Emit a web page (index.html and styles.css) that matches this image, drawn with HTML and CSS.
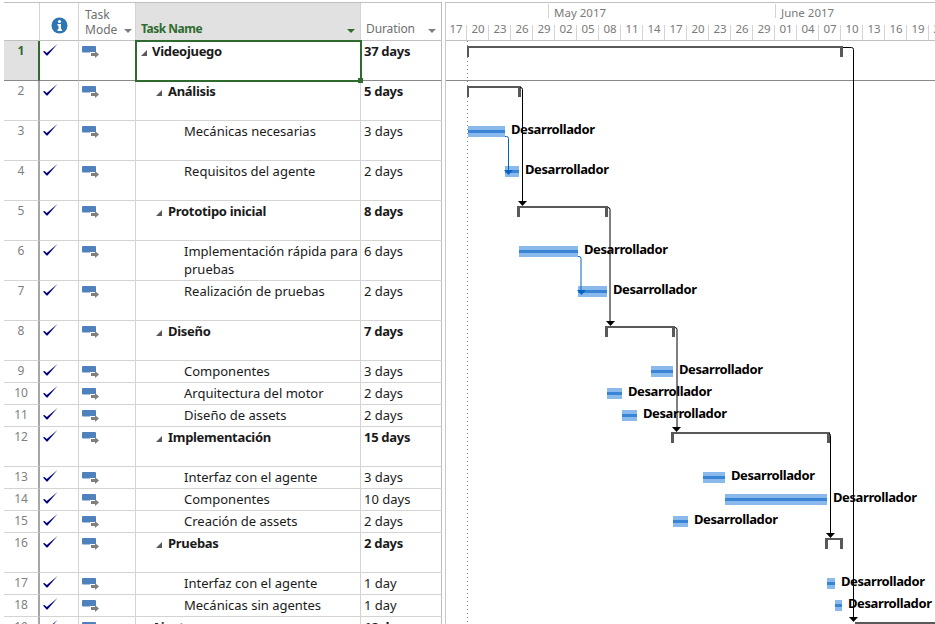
FILE: index.html
```html
<!DOCTYPE html>
<html lang="en">
<head>
  <meta charset="UTF-8">
  <title>Videojuego - Gantt</title>
  <link rel="stylesheet" href="styles.css">
</head>
<body>
  <svg class="defs" width="0" height="0">
    <symbol id="check" viewBox="0 0 16 14">
      <path d="M0 7.5 L1.5 7 L3.8 9 L14.5 0 L4.5 11.5 L3.5 11.5 Z" fill="#00007f"/>
    </symbol>
    <symbol id="mode" viewBox="0 0 18 14">
      <rect x="0" y="1" width="14" height="6.5" rx="1" fill="#4f81bd"/>
      <path d="M8 9.5 H13" stroke="#fff" stroke-width="5"/>
      <path d="M9 9.5 H14" stroke="#7f7f7f" stroke-width="3"/>
      <path d="M13 6 L17 9.5 L13 13 Z" fill="#7f7f7f"/>
    </symbol>
  </svg>

  <div class="page">
    <div class="sheet">
      <div class="row head">
        <div class="cell"></div>
        <div class="cell info-head">
          <svg width="17" height="17" viewBox="0 0 17 17">
            <circle cx="8.5" cy="8.5" r="8" fill="#2e75b6"/>
            <circle cx="8.5" cy="4.5" r="1.6" fill="#fff"/>
            <path d="M6.5 7 H10 V12.2 H11 V14 H6.5 V12.2 H7.5 V8.8 H6.5 Z" fill="#fff"/>
          </svg>
        </div>
        <div class="cell mode-head">Task Mode<span class="drop"></span></div>
        <div class="cell name-head">Task Name<span class="drop green"></span></div>
        <div class="cell dur-head">Duration<span class="drop"></span></div>
      </div>

      <div class="row tall selected">
        <div class="cell num">1</div>
        <div class="cell"><svg class="check"><use href="#check"/></svg></div>
        <div class="cell"><svg class="mode"><use href="#mode"/></svg></div>
        <div class="cell name lvl0 bold active"><span class="tri"></span>Videojuego</div>
        <div class="cell dur bold">37 days</div>
      </div>
      <div class="row tall">
        <div class="cell num">2</div>
        <div class="cell"><svg class="check"><use href="#check"/></svg></div>
        <div class="cell"><svg class="mode"><use href="#mode"/></svg></div>
        <div class="cell name lvl1 bold"><span class="tri"></span>Análisis</div>
        <div class="cell dur bold">5 days</div>
      </div>
      <div class="row tall">
        <div class="cell num">3</div>
        <div class="cell"><svg class="check"><use href="#check"/></svg></div>
        <div class="cell"><svg class="mode"><use href="#mode"/></svg></div>
        <div class="cell name lvl2">Mecánicas necesarias</div>
        <div class="cell dur">3 days</div>
      </div>
      <div class="row tall">
        <div class="cell num">4</div>
        <div class="cell"><svg class="check"><use href="#check"/></svg></div>
        <div class="cell"><svg class="mode"><use href="#mode"/></svg></div>
        <div class="cell name lvl2">Requisitos del agente</div>
        <div class="cell dur">2 days</div>
      </div>
      <div class="row tall">
        <div class="cell num">5</div>
        <div class="cell"><svg class="check"><use href="#check"/></svg></div>
        <div class="cell"><svg class="mode"><use href="#mode"/></svg></div>
        <div class="cell name lvl1 bold"><span class="tri"></span>Prototipo inicial</div>
        <div class="cell dur bold">8 days</div>
      </div>
      <div class="row tall">
        <div class="cell num">6</div>
        <div class="cell"><svg class="check"><use href="#check"/></svg></div>
        <div class="cell"><svg class="mode"><use href="#mode"/></svg></div>
        <div class="cell name lvl2">Implementación rápida para pruebas</div>
        <div class="cell dur">6 days</div>
      </div>
      <div class="row tall">
        <div class="cell num">7</div>
        <div class="cell"><svg class="check"><use href="#check"/></svg></div>
        <div class="cell"><svg class="mode"><use href="#mode"/></svg></div>
        <div class="cell name lvl2">Realización de pruebas</div>
        <div class="cell dur">2 days</div>
      </div>
      <div class="row tall">
        <div class="cell num">8</div>
        <div class="cell"><svg class="check"><use href="#check"/></svg></div>
        <div class="cell"><svg class="mode"><use href="#mode"/></svg></div>
        <div class="cell name lvl1 bold"><span class="tri"></span>Diseño</div>
        <div class="cell dur bold">7 days</div>
      </div>
      <div class="row">
        <div class="cell num">9</div>
        <div class="cell"><svg class="check"><use href="#check"/></svg></div>
        <div class="cell"><svg class="mode"><use href="#mode"/></svg></div>
        <div class="cell name lvl2">Componentes</div>
        <div class="cell dur">3 days</div>
      </div>
      <div class="row">
        <div class="cell num">10</div>
        <div class="cell"><svg class="check"><use href="#check"/></svg></div>
        <div class="cell"><svg class="mode"><use href="#mode"/></svg></div>
        <div class="cell name lvl2">Arquitectura del motor</div>
        <div class="cell dur">2 days</div>
      </div>
      <div class="row">
        <div class="cell num">11</div>
        <div class="cell"><svg class="check"><use href="#check"/></svg></div>
        <div class="cell"><svg class="mode"><use href="#mode"/></svg></div>
        <div class="cell name lvl2">Diseño de assets</div>
        <div class="cell dur">2 days</div>
      </div>
      <div class="row tall">
        <div class="cell num">12</div>
        <div class="cell"><svg class="check"><use href="#check"/></svg></div>
        <div class="cell"><svg class="mode"><use href="#mode"/></svg></div>
        <div class="cell name lvl1 bold"><span class="tri"></span>Implementación</div>
        <div class="cell dur bold">15 days</div>
      </div>
      <div class="row">
        <div class="cell num">13</div>
        <div class="cell"><svg class="check"><use href="#check"/></svg></div>
        <div class="cell"><svg class="mode"><use href="#mode"/></svg></div>
        <div class="cell name lvl2">Interfaz con el agente</div>
        <div class="cell dur">3 days</div>
      </div>
      <div class="row">
        <div class="cell num">14</div>
        <div class="cell"><svg class="check"><use href="#check"/></svg></div>
        <div class="cell"><svg class="mode"><use href="#mode"/></svg></div>
        <div class="cell name lvl2">Componentes</div>
        <div class="cell dur">10 days</div>
      </div>
      <div class="row">
        <div class="cell num">15</div>
        <div class="cell"><svg class="check"><use href="#check"/></svg></div>
        <div class="cell"><svg class="mode"><use href="#mode"/></svg></div>
        <div class="cell name lvl2">Creación de assets</div>
        <div class="cell dur">2 days</div>
      </div>
      <div class="row tall">
        <div class="cell num">16</div>
        <div class="cell"><svg class="check"><use href="#check"/></svg></div>
        <div class="cell"><svg class="mode"><use href="#mode"/></svg></div>
        <div class="cell name lvl1 bold"><span class="tri"></span>Pruebas</div>
        <div class="cell dur bold">2 days</div>
      </div>
      <div class="row">
        <div class="cell num">17</div>
        <div class="cell"><svg class="check"><use href="#check"/></svg></div>
        <div class="cell"><svg class="mode"><use href="#mode"/></svg></div>
        <div class="cell name lvl2">Interfaz con el agente</div>
        <div class="cell dur">1 day</div>
      </div>
      <div class="row">
        <div class="cell num">18</div>
        <div class="cell"><svg class="check"><use href="#check"/></svg></div>
        <div class="cell"><svg class="mode"><use href="#mode"/></svg></div>
        <div class="cell name lvl2">Mecánicas sin agentes</div>
        <div class="cell dur">1 day</div>
      </div>
      <div class="row">
        <div class="cell num">19</div>
        <div class="cell"><svg class="check"><use href="#check"/></svg></div>
        <div class="cell"><svg class="mode"><use href="#mode"/></svg></div>
        <div class="cell name lvl0 bold"><span class="tri"></span>Ajustes</div>
        <div class="cell dur bold">12 days</div>
      </div>
    </div>

    <div class="chart">
      <div class="timescale">
        <div class="months">
          <div class="month lead"></div>
          <div class="month may">May 2017</div>
          <div class="month">June 2017</div>
        </div>
        <div class="days">
          <div class="day">17</div><div class="day">20</div><div class="day">23</div><div class="day">26</div>
          <div class="day">29</div><div class="day">02</div><div class="day">05</div><div class="day">08</div>
          <div class="day">11</div><div class="day">14</div><div class="day">17</div><div class="day">20</div>
          <div class="day">23</div><div class="day">26</div><div class="day">29</div><div class="day">01</div>
          <div class="day">04</div><div class="day">07</div><div class="day">10</div><div class="day">13</div>
          <div class="day">16</div><div class="day">19</div><div class="day">22</div>
        </div>
      </div>

      <!-- viewBox uses page coordinates, easier to read against the rows -->
      <svg class="canvas" width="489" height="583" viewBox="446 41 489 583">
        <path class="today" d="M467.5 41 V624"/>
        <path class="sel-line" d="M445 80.5 H935"/>

        <!-- summaries -->
        <path class="summary" d="M467 46 H843 V57 H840 V48 H469 V57 H467 Z"/>
        <path class="summary" d="M467 86 H521 V97 H518 V88 H469 V97 H467 Z"/>
        <path class="summary" d="M517 206 H608 V217 H605 V208 H520 V217 H517 Z"/>
        <path class="summary" d="M605 326 H675 V337 H672 V328 H608 V337 H605 Z"/>
        <path class="summary" d="M671 432 H830 V443 H827 V434 H674 V443 H671 Z"/>
        <path class="summary" d="M825 538 H843 V549 H840 V540 H828 V549 H825 Z"/>
        <rect class="summary" x="855" y="622" width="80" height="2"/>

        <!-- tasks -->
        <rect class="bar" x="468" y="126" width="37" height="11"/><rect class="fill" x="468" y="130" width="37" height="3"/>
        <rect class="bar" x="505" y="166" width="14" height="11"/><rect class="fill" x="505" y="170" width="14" height="3"/>
        <rect class="bar" x="519" y="246" width="59" height="11"/><rect class="fill" x="519" y="250" width="59" height="3"/>
        <rect class="bar" x="578" y="286" width="29" height="11"/><rect class="fill" x="578" y="290" width="29" height="3"/>
        <rect class="bar" x="651" y="366" width="22" height="11"/><rect class="fill" x="651" y="370" width="22" height="3"/>
        <rect class="bar" x="607" y="388" width="15" height="11"/><rect class="fill" x="607" y="392" width="15" height="3"/>
        <rect class="bar" x="622" y="410" width="15" height="11"/><rect class="fill" x="622" y="414" width="15" height="3"/>
        <rect class="bar" x="703" y="472" width="22" height="11"/><rect class="fill" x="703" y="476" width="22" height="3"/>
        <rect class="bar" x="725" y="494" width="102" height="11"/><rect class="fill" x="725" y="498" width="102" height="3"/>
        <rect class="bar" x="673" y="516" width="15" height="11"/><rect class="fill" x="673" y="520" width="15" height="3"/>
        <rect class="bar" x="827" y="578" width="8" height="11"/><rect class="fill" x="827" y="582" width="8" height="3"/>
        <rect class="bar" x="835" y="600" width="7" height="11"/><rect class="fill" x="835" y="604" width="7" height="3"/>

        <!-- links -->
        <path class="link" d="M843 47.5 H851.5 a2 2 0 0 1 2 2 V618"/><path d="M849 617 H858 L853.5 622 Z"/>
        <path class="link" d="M521 87.5 H520.5 a2 2 0 0 1 2 2 V202"/><path d="M518 201 H527 L522.5 206 Z"/>
        <path class="link" d="M608 207.5 a2 2 0 0 1 2 2 V322"/><path d="M606 321 H615 L610.5 326 Z"/>
        <path class="link" d="M675 327.5 a2 2 0 0 1 2 2 V428"/><path d="M672 427 H681 L676.5 432 Z"/>
        <path class="link" d="M829 433.5 a2 2 0 0 1 1.5 2 V534"/><path d="M826 533 H835 L830.5 538 Z"/>
        <path class="link blue" d="M505 136.5 H506.5 a2 2 0 0 1 2 2 V171"/><path class="arrow-blue" d="M504 170 H513 L508.5 175 Z"/>
        <path class="link blue" d="M578 256.5 H579 a2 2 0 0 1 2 2 V291"/><path class="arrow-blue" d="M577 290 H586 L581.5 295 Z"/>

        <!-- resource names -->
        <text class="res" x="511" y="134">Desarrollador</text>
        <text class="res" x="525" y="174">Desarrollador</text>
        <text class="res" x="584" y="254">Desarrollador</text>
        <text class="res" x="613" y="294">Desarrollador</text>
        <text class="res" x="679" y="374">Desarrollador</text>
        <text class="res" x="628" y="396">Desarrollador</text>
        <text class="res" x="643" y="418">Desarrollador</text>
        <text class="res" x="731" y="480">Desarrollador</text>
        <text class="res" x="833" y="502">Desarrollador</text>
        <text class="res" x="694" y="524">Desarrollador</text>
        <text class="res" x="841" y="586">Desarrollador</text>
        <text class="res" x="848" y="608">Desarrollador</text>
      </svg>
    </div>
  </div>
</body>
</html>
```

FILE: styles.css
```css
html, body {
  margin: 0;
  padding: 0;
  height: 624px;
  overflow: hidden;
  background: #fff;
  font-family: "Noto Sans", "Open Sans", sans-serif;
  font-size: 13px;
  color: #1a1a1a;
}

.defs {
  display: block;
}

.page {
  display: flex;
  gap: 3px;
  width: 935px;
  height: 622px;
  padding: 2px 0 0 4px;
  box-sizing: content-box;
  overflow: hidden;
}

.sheet {
  width: 438px;
  flex: none;
  border-top: 1px solid #c0c0c0;
}

.row {
  display: grid;
  grid-template-columns: 36px 39px 57px 225px 81px;
  height: 22px;
}

.row.tall {
  height: 40px;
}

.row.head {
  height: 38px;
}

.cell {
  position: relative;
  box-sizing: border-box;
  border-right: 1px solid #d4d4d4;
  border-bottom: 1px solid #d4d4d4;
  line-height: 18px;
  padding-top: 1px;
}

.cell:first-child {
  border-right: 2px solid #a6a6a6;
}

.cell:last-child {
  border-right: 1px solid #bdbdbd;
}

/* header */
.head .cell {
  border-bottom-color: #c0c0c0;
  color: #6f6f6f;
  font-size: 12px;
}

.head .cell:first-child {
  border-right: 1px solid #d4d4d4;
}

.info-head {
  display: flex;
  align-items: flex-end;
  justify-content: center;
  padding-bottom: 6px;
}

.mode-head {
  line-height: 15px;
  padding: 4px 24px 0 6px;
}

.name-head {
  background: #e1e1e1;
  padding: 17px 0 0 5px;
  font-weight: bold;
  letter-spacing: -0.5px;
  color: #2f6b2f !important;
}

.dur-head {
  padding: 17px 0 0 5px;
  letter-spacing: -0.1px;
}

.drop {
  position: absolute;
  right: 5px;
  bottom: 7px;
  width: 0;
  height: 0;
  border-left: 4px solid transparent;
  border-right: 4px solid transparent;
  border-top: 4px solid #7f7f7f;
}

.mode-head .drop {
  right: 3px;
}

.drop.green {
  border-top-color: #2f6b2f;
}

/* rows */
.num {
  text-align: center;
  font-size: 12px;
  color: #7f7f7f;
}

.check {
  display: block;
  width: 16px;
  height: 14px;
  margin: 2px 0 0 3px;
}

.mode {
  display: block;
  width: 18px;
  height: 14px;
  margin: 3px 0 0 3px;
}

.name {
  padding-right: 2px;
}

.lvl0 {
  padding-left: 5px;
}

.lvl1 {
  padding-left: 20px;
}

.lvl2 {
  padding-left: 48px;
}

.dur {
  padding-left: 3px;
}

.bold {
  font-weight: bold;
  letter-spacing: -0.3px;
}

.tri {
  display: inline-block;
  width: 6px;
  height: 6px;
  margin-right: 6px;
  background: #595959;
  clip-path: polygon(100% 0, 100% 100%, 0 100%);
}

.lvl0 .tri {
  margin-right: 5px;
}

/* selected row */
.selected .cell {
  border-bottom-color: #8a8a8a;
}

.selected .num {
  background: #e1e1e1;
  color: #2f6b2f;
  font-weight: bold;
  border-right: 2px solid #2f6b2f;
}

.active {
  z-index: 1;
  border: 0;
  outline: 2px solid #2f6b2f;
  outline-offset: -1px;
  padding-top: 1px;
}

.active::after {
  content: "";
  position: absolute;
  right: -2px;
  bottom: -2px;
  width: 5px;
  height: 5px;
  background: #2f6b2f;
}

/* gantt */
.chart {
  width: 489px;
  flex: none;
  border-left: 1px solid #c8c8c8;
  border-top: 1px solid #c0c0c0;
  overflow: hidden;
}

.timescale {
  height: 37px;
  border-bottom: 1px solid #c0c0c0;
  font-size: 11.5px;
  color: #7a7a7a;
}

.months {
  display: flex;
  height: 16px;
}

.month {
  position: relative;
  padding-left: 6px;
  line-height: 19px;
  white-space: nowrap;
}

.month.lead {
  box-sizing: border-box;
  width: 102px;
  padding: 0;
}

.month.may {
  box-sizing: border-box;
  width: 227px;
}

.month::before {
  content: "";
  position: absolute;
  left: 0;
  top: 1px;
  height: 14px;
  width: 1px;
  background: #d4d4d4;
}

.month.lead::before {
  display: none;
}

.days {
  display: flex;
  height: 21px;
  margin-left: -1px;
}

.day {
  position: relative;
  flex: none;
  width: 22px;
  text-align: center;
  line-height: 20px;
}

.day::after {
  content: "";
  position: absolute;
  right: 0;
  bottom: 0;
  width: 1px;
  height: 15px;
  background: #d4d4d4;
}

.canvas {
  display: block;
}

.today {
  stroke: #8c8c8c;
  stroke-width: 1;
  stroke-dasharray: 1 3;
  fill: none;
}

.sel-line {
  stroke: #8a8a8a;
  stroke-width: 1;
}

.summary {
  fill: #595959;
}

.bar {
  fill: #8ab9ec;
}

.fill {
  fill: #3a84d6;
}

.link {
  fill: none;
  stroke: #000;
  stroke-width: 1;
}

.link.blue {
  stroke: #0563c1;
}

.arrow-blue {
  fill: #0563c1;
}

.res {
  font-family: "Noto Sans", "Open Sans", sans-serif;
  font-size: 13px;
  font-weight: bold;
  letter-spacing: -0.4px;
  fill: #000;
}
```
